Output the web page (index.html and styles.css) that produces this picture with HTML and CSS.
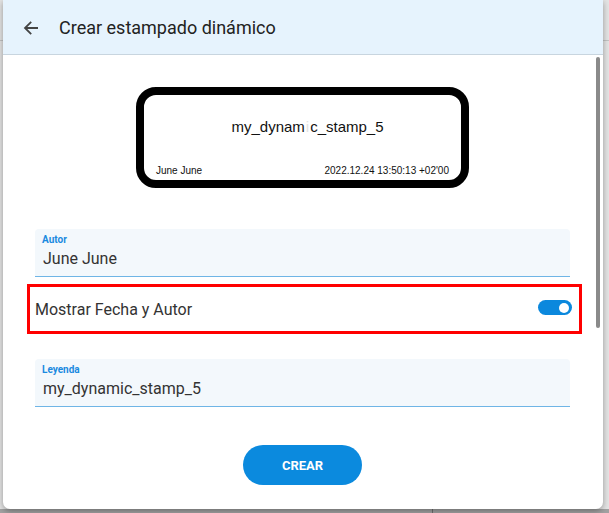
FILE: index.html
```html
<!DOCTYPE html>
<html lang="es">
<head>
    <meta charset="UTF-8">
    <meta name="viewport" content="width=device-width, initial-scale=1.0">
    <title>Crear estampado dinámico</title>
    <link rel="stylesheet" href="styles.css">
</head>
<body>
    <div class="dialog">
        <header class="dialog-header">
            <button class="back" type="button" aria-label="Volver">
                <svg width="16" height="16" viewBox="0 0 16 16">
                    <path d="M15 8H2.5M8.2 1.8 2 8l6.2 6.2" fill="none" stroke="#444" stroke-width="1.8"/>
                </svg>
            </button>
            <h1>Crear estampado dinámico</h1>
        </header>

        <div class="dialog-body">
            <div class="stamp">
                <div class="stamp-title">my_dynam<span class="faint">i</span>c_stamp_5</div>
                <div class="stamp-footer">
                    <span>June June</span>
                    <span>2022.12.24 13:50:13 +02'00</span>
                </div>
            </div>

            <div class="field">
                <label for="autor">Autor</label>
                <input id="autor" type="text" value="June June">
            </div>

            <div class="toggle-row">
                <span>Mostrar Fecha y Autor</span>
                <span class="switch"><span class="knob"></span></span>
            </div>

            <div class="field">
                <label for="leyenda">Leyenda</label>
                <input id="leyenda" type="text" value="my_dynamic_stamp_5">
            </div>

            <div class="actions">
                <button class="primary" type="button">CREAR</button>
            </div>

            <div class="scroll-thumb"></div>
        </div>
    </div>
</body>
</html>
```

FILE: styles.css
```css
body {
    margin: 0;
    height: 513px;
    overflow: hidden;
    font-family: Roboto, "Noto Sans", sans-serif;
    background:
        linear-gradient(to right, transparent 432px, #6e6e6e 432px, #6e6e6e 433px, transparent 433px) bottom / 100% 4px no-repeat,
        linear-gradient(to bottom, transparent 509px, #a2a2a2 509px),
        linear-gradient(to bottom, transparent 40px, #c4c4c4 40px, #c4c4c4 41px, transparent 41px),
        #e4e4e4;
}
.dialog {
    margin-left: 3px;
    width: 600px;
    height: 509px;
    background: white;
    border-radius: 0 0 7px 7px;
    box-shadow: 0 2px 6px rgba(0, 0, 0, 0.35);
    overflow: hidden;
    display: flex;
    flex-direction: column;
}
.dialog-header {
    height: 54px;
    flex-shrink: 0;
    display: flex;
    align-items: center;
    background: #e6f3fd;
    border-bottom: 1px solid #c8d5df;
    padding-left: 20px;
}
.back {
    border: none;
    background: none;
    padding: 0;
    width: 16px;
    height: 16px;
    display: flex;
    margin-top: 1px;
}
.dialog-header h1 {
    margin: 0 0 0 20px;
    font-size: 18px;
    font-weight: 400;
    color: #222;
}
.dialog-body {
    position: relative;
    flex: 1;
    padding: 32px 33px 0 32px;
}
.scroll-thumb {
    position: absolute;
    top: 2px;
    right: 3px;
    width: 4px;
    height: 271px;
    border-radius: 2px;
    background: #8a8a8a;
}
.stamp {
    width: 317px;
    height: 85px;
    margin: 0 auto;
    border: 8.5px solid black;
    border-radius: 20px;
    display: flex;
    flex-direction: column;
    font-family: "Liberation Sans", Arial, sans-serif;
    color: #111;
}
.stamp-title {
    flex: 1;
    display: flex;
    align-items: center;
    justify-content: center;
    font-size: 15px;
    padding: 0 0 8px 10px;
}
.faint {
    color: #e2e2e2;
    margin: 0 1px;
}
.stamp-footer {
    display: flex;
    justify-content: space-between;
    padding: 0 12px 4px 12px;
    font-size: 10px;
}
.field {
    margin-top: 41px;
    height: 47px;
    background: #f3f8fc;
    border-bottom: 1px solid #6fb5e6;
    border-radius: 4px 4px 0 0;
    padding: 0 7px;
    display: flex;
    flex-direction: column;
}
.field label {
    font-size: 10px;
    font-weight: 700;
    color: #1a8ae0;
    margin-top: 5px;
}
.field input {
    border: none;
    background: none;
    padding: 0 0 0 1px;
    margin-top: 4px;
    font-family: Roboto, sans-serif;
    font-size: 16px;
    color: #333;
    outline: none;
}
.toggle-row {
    margin: 7px -12px 0 -8px;
    height: 44px;
    border: 3px solid #f00;
    padding: 0 7px 0 5px;
    display: flex;
    align-items: center;
    justify-content: space-between;
    font-size: 16px;
    color: #333;
}
.switch {
    width: 34px;
    height: 15px;
    border-radius: 8px;
    background: #0b88dd;
    display: flex;
    align-items: center;
    justify-content: flex-end;
    padding-right: 3px;
    margin-top: -3px;
    box-sizing: border-box;
}
.knob {
    width: 10px;
    height: 10px;
    border-radius: 50%;
    background: white;
}
.toggle-row + .field {
    margin-top: 25px;
}
.actions {
    display: flex;
    justify-content: center;
    margin-top: 38px;
}
.primary {
    width: 119px;
    height: 40px;
    border: none;
    border-radius: 20px;
    background: #0b8ade;
    color: white;
    font-family: Roboto, sans-serif;
    font-weight: 700;
    font-size: 13px;
    cursor: pointer;
}
```
